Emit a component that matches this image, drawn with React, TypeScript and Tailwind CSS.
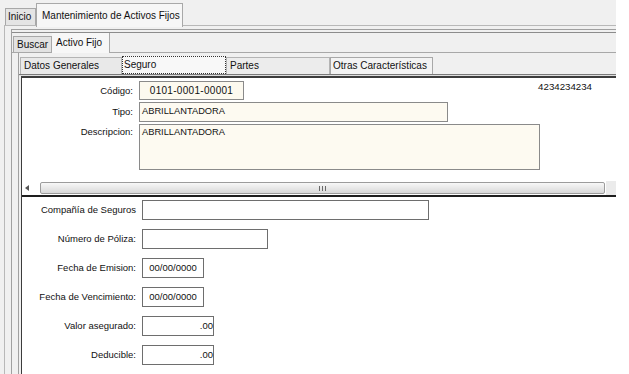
import React from "react";

function Label({ children, w }: { children: React.ReactNode; w: number }) {
  return (
    <div className="text-right shrink-0 text-[9.5px] pr-[6px]" style={{ width: w }}>
      {children}
    </div>
  );
}

export default function App() {
  return (
    <div className="w-[629px] h-[374px] bg-white overflow-hidden text-[#111] font-['Liberation_Sans',Arial,sans-serif] leading-none">
      <div className="w-[616px] h-full bg-[#f0f0f0] flex flex-col">
        {/* Level 1 tabs */}
        <div className="h-[25px] shrink-0 flex items-end pl-[5px]">
          <div className="h-[17px] w-[31px] border border-b-0 border-[#a8a8a8] bg-[#e4e4e4] text-[10px] flex items-center pl-[2px]">
            Inicio
          </div>
          <div className="relative z-10 -mb-[2px] h-[24px] w-[147px] border border-b-0 border-[#a8a8a8] bg-[#f6f6f6] text-[10px] flex items-start pt-[7px] pl-[5px]">
            Mantenimiento de Activos Fijos
          </div>
        </div>
        {/* Level 1 panel */}
        <div className="flex-1 ml-[4px] border-t border-l border-[#b8b8b8] pt-[3px] flex flex-col min-h-0">
          {/* Level 2 box */}
          <div className="flex-1 ml-[6px] border-t border-l border-[#a0a0a0] pt-[2px] flex flex-col min-h-0">
            {/* Level 2 tabs */}
            <div className="h-[20px] shrink-0 border-t border-[#8c8c8c] flex items-end pl-[1px]">
              <div className="h-[16px] w-[39px] border border-b-0 border-[#a8a8a8] bg-[#e2e2e2] text-[10px] flex items-center pl-[3px]">
                Buscar
              </div>
              <div className="relative z-10 -mb-[1px] h-[20px] w-[58px] border-r border-[#a8a8a8] bg-[#f7f7f7] text-[10px] flex items-start pt-[5px] pl-[4px]">
                Activo Fijo
              </div>
            </div>
            {/* Level 2 panel */}
            <div className="flex-1 border-t border-[#a8a8a8] flex flex-col min-h-0">
              {/* Level 3 box */}
              <div className="flex-1 ml-[6px] border-l border-[#a0a0a0] flex flex-col min-h-0">
                {/* Level 3 tabs */}
                <div className="h-[21px] shrink-0 flex items-end pl-[1px]">
                  <div className="h-[17px] w-[102px] border border-b-0 border-[#b4b4b4] bg-[#e9e9e9] text-[10px] flex items-center pl-[3px]">
                    Datos Generales
                  </div>
                  <div className="h-[18px] w-[104px] border border-dotted border-[#333] bg-[#f8f8f8] text-[10px] flex items-center pl-[1px] pb-[1px]">
                    Seguro
                  </div>
                  <div className="h-[17px] w-[104px] border border-b-0 border-[#b4b4b4] bg-[#ececec] text-[10px] flex items-center pl-[3px]">
                    Partes
                  </div>
                  <div className="h-[17px] w-[103px] border border-b-0 border-[#a8a8a8] bg-[#f3f3f3] text-[10px] flex items-center pl-[2px]">
                    Otras Características
                  </div>
                </div>
                {/* Level 3 panel */}
                <div className="flex-1 border-t border-[#7a7a7a] flex flex-col min-h-0">
                  <div className="h-[1px] bg-[#dedede] shrink-0" />
                  <div className="flex-1 ml-[2px] border-t-2 border-l border-[#3c3c3c] bg-white flex flex-col min-h-0">
                    {/* Top section */}
                    <div className="h-[103px] shrink-0 pt-[3px] flex flex-col gap-[2px]">
                      <div className="flex items-start">
                        <div className="flex items-center h-[19px]">
                          <Label w={117}>Código:</Label>
                          <div className="h-[19px] w-[105px] border border-[#8a8a8a] bg-[#fcf9ef] text-[10px] tracking-[0.3px] flex items-center justify-center">
                            0101-0001-00001
                          </div>
                        </div>
                        <div className="ml-auto mr-[24px] mt-[1px] text-[9.7px]">4234234234</div>
                      </div>
                      <div className="flex items-center">
                        <Label w={117}>Tipo:</Label>
                        <div className="h-[20px] w-[309px] border border-[#8a8a8a] bg-[#fdfaf1] text-[9.3px] flex items-center pl-[2px]">
                          ABRILLANTADORA
                        </div>
                      </div>
                      <div className="flex items-start">
                        <div className="pt-[3px]">
                          <Label w={117}>Descripcion:</Label>
                        </div>
                        <div className="h-[46px] w-[401px] border border-[#8a8a8a] bg-[#fdfaf1] text-[9.3px] pl-[2px] pt-[3px]">
                          ABRILLANTADORA
                        </div>
                      </div>
                    </div>
                    {/* Scrollbar */}
                    <div className="h-[14px] shrink-0 flex items-center">
                      <div className="w-[18px] flex items-center justify-start pl-[3px]">
                        <svg width="4" height="6" viewBox="0 0 4 6">
                          <path d="M4 0 L0 3 L4 6 Z" fill="#555" />
                        </svg>
                      </div>
                      <div className="h-[12px] w-[565px] rounded-[2px] border border-[#9c9c9c] bg-gradient-to-b from-[#f8f8f8] to-[#d9d9d9] flex items-center justify-center gap-[2px]">
                        <div className="w-[1px] h-[5px] bg-[#6a6a6a]" />
                        <div className="w-[1px] h-[5px] bg-[#6a6a6a]" />
                        <div className="w-[1px] h-[5px] bg-[#6a6a6a]" />
                      </div>
                      <div className="flex-1 h-[14px] ml-[1px] bg-[#ebebeb]" />
                    </div>
                    <div className="h-[2px] bg-[#1e1e1e] shrink-0" />
                    {/* Lower section */}
                    <div className="flex-1 pt-[3px] flex flex-col gap-[9px]">
                      <div className="flex items-center h-[20px]">
                        <Label w={120}>Compañía de Seguros</Label>
                        <div className="h-[20px] w-[287px] border border-[#6e6e6e]" />
                      </div>
                      <div className="flex items-center h-[20px]">
                        <Label w={120}>Número de Póliza:</Label>
                        <div className="h-[20px] w-[126px] border border-[#6e6e6e]" />
                      </div>
                      <div className="flex items-center h-[20px]">
                        <Label w={120}>Fecha de Emision:</Label>
                        <div className="h-[20px] w-[62px] border border-[#6e6e6e] text-[9.5px] flex items-center justify-center">
                          00/00/0000
                        </div>
                      </div>
                      <div className="flex items-center h-[20px]">
                        <Label w={120}>Fecha de Vencimiento:</Label>
                        <div className="h-[20px] w-[62px] border border-[#6e6e6e] text-[9.5px] flex items-center justify-center">
                          00/00/0000
                        </div>
                      </div>
                      <div className="flex items-center h-[20px]">
                        <Label w={120}>Valor asegurado:</Label>
                        <div className="h-[20px] w-[72px] border border-[#6e6e6e] text-[9.5px] flex items-center justify-end pr-[0px]">
                          .00
                        </div>
                      </div>
                      <div className="flex items-center h-[20px]">
                        <Label w={120}>Deducible:</Label>
                        <div className="h-[20px] w-[72px] border border-[#6e6e6e] text-[9.5px] flex items-center justify-end pr-[0px]">
                          .00
                        </div>
                      </div>
                    </div>
                  </div>
                </div>
              </div>
            </div>
          </div>
        </div>
      </div>
    </div>
  );
}
